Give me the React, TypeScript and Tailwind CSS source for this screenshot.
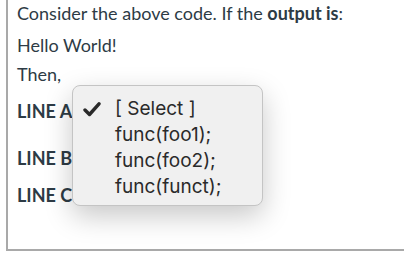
import React from 'react';

const options = ['[ Select ]', 'func(foo1);', 'func(foo2);', 'func(funct);'];

export default function App() {
  return (
    <div className="relative w-[404px] h-[258px] overflow-hidden bg-white" style={{ fontFamily: 'Lato, "Noto Sans", sans-serif' }}>
      <div className="ml-[6px] w-[420px] border-l-2 border-b-2 border-[#a9a9a9] pl-[9px] pb-[40px] text-[18px] leading-[27px] text-[#2d3b45]">
        <p>
          Consider the above code. If the <b className="font-bold">output is</b>:
        </p>
        <p className="mt-[5px]">Hello World!</p>
        <p className="mt-[2px]">Then,</p>
        <p className="mt-[10px] font-bold">LINE A</p>
        <p className="mt-[20px] font-bold">LINE B</p>
        <p className="mt-[10px] font-bold">LINE C</p>
      </div>

      {/* open select menu */}
      <div
        className="absolute left-[72px] top-[85px] w-[191px] h-[121px] rounded-[8px] border border-[#c4c4c4] bg-[#f0f0f0] pt-[10px] shadow-[0_10px_28px_rgba(0,0,0,0.22)] text-[#2a2a2a]"
        style={{ fontFamily: 'Inter, "Liberation Sans", sans-serif' }}
      >
        {options.map((o, i) => (
          <div key={o} className="relative h-[26px] pl-[42px] text-[19px] leading-[26px]">
            {i === 0 && (
              <svg className="absolute left-[10px] top-[6px]" width="18" height="15" viewBox="0 0 18 15">
                <path d="M2 8 L6.5 12.5 L16 1.8" fill="none" stroke="#2a2a2a" strokeWidth="3.4" strokeLinecap="round" strokeLinejoin="round" />
              </svg>
            )}
            {o}
          </div>
        ))}
      </div>
    </div>
  );
}
